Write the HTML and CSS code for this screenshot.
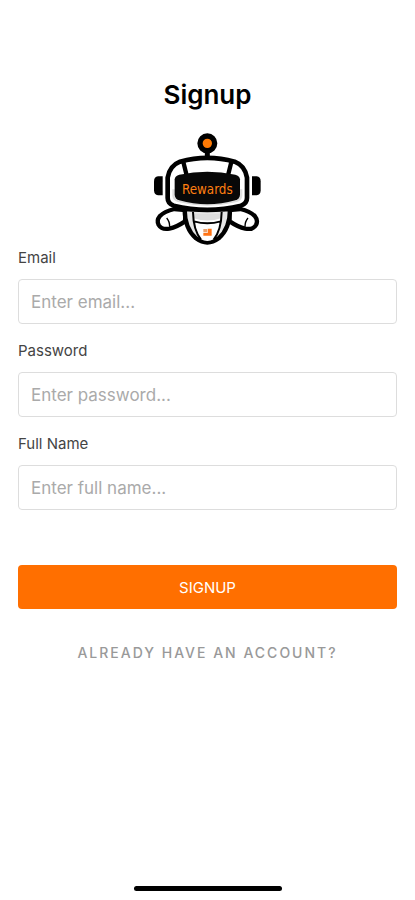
FILE: index.html
```
<!DOCTYPE html>
<html lang="en">
<head>
    <meta charset="UTF-8">
    <meta name="viewport" content="width=device-width, initial-scale=1.0">
    <title>Signup</title>
    <link rel="stylesheet" href="styles.css">
</head>
<body>

    <main class="signup">
        <h1>Signup</h1>

        <!-- Robot logo -->
        <svg class="logo" viewBox="15 18 345 348" role="img" aria-label="Rewards robot">
            <!-- antenna -->
            <path d="M187 65V105" stroke="#000" stroke-width="15"/>
            <circle cx="187" cy="52" r="22" fill="#ff7a05" stroke="#000" stroke-width="16"/>
            <!-- ears -->
            <path d="M53 151V208H39Q27 206 27 193V166Q27 153 39 151Z"/>
            <path d="M321 151V208H335Q347 206 347 193V166Q347 153 335 151Z"/>
            <!-- arms -->
            <path d="M88 249Q58 256 44 271Q34 283 41 297Q50 312 73 308Q95 303 120 286L122 252Z" fill="#fff" stroke="#000" stroke-width="13"/>
            <path d="M286 249Q316 256 330 271Q340 283 333 297Q324 312 301 308Q279 303 254 286L252 252Z" fill="#fff" stroke="#000" stroke-width="13"/>
            <path d="M65 276Q74 286 74 302M309 276Q300 286 300 302" fill="none" stroke="#000" stroke-width="4"/>
            <!-- body -->
            <path d="M119 250Q119 308 153 337Q187 362 221 337Q255 308 255 250Z" fill="#e6e6e6" stroke="#000" stroke-width="13"/>
            <path d="M143 262Q144 312 168 340Q187 350 206 340Q230 312 231 262Z" fill="#fff"/>
            <path d="M146 262H228V277Q187 290 146 277Z" fill="#dcdcdc"/>
            <path d="M144 258Q145 312 168 341M230 258Q229 312 206 341M147 286Q187 298 227 286" fill="none" stroke="#000" stroke-width="6"/>
            <path d="M175 309H186V319H175Z" fill="#e9a16d"/>
            <path d="M188 308H200V329H175V321H188Z" fill="#ff7416"/>
            <!-- head -->
            <path d="M105 107Q187 84 269 107Q300 119 306 155V216Q306 232 288 239Q187 264 86 239Q68 232 68 216V155Q74 119 105 107Z" fill="#fff" stroke="#000" stroke-width="14"/>
            <path d="M82 210Q84 224 98 228Q187 250 276 228Q290 224 292 210V190H82Z" fill="#dedede"/>
            <path d="M115 108L126 152M259 108L248 152" stroke="#000" stroke-width="13"/>
            <path d="M103 146Q187 128 271 146Q284 149 285 160V206Q284 219 271 223Q187 247 103 223Q90 219 89 206V160Q90 149 103 146Z" fill="#080808"/>
            <text class="logo-text" x="187" y="205" text-anchor="middle">Rewards</text>
        </svg>

        <form class="signup-form">
            <div class="field">
                <label for="email">Email</label>
                <input type="email" id="email" placeholder="Enter email...">
            </div>
            <div class="field">
                <label for="password">Password</label>
                <input type="password" id="password" placeholder="Enter password...">
            </div>
            <div class="field">
                <label for="full-name">Full Name</label>
                <input type="text" id="full-name" placeholder="Enter full name...">
            </div>
            <button type="submit" class="signup-btn">SIGNUP</button>
        </form>

        <a href="#" class="login-link">ALREADY HAVE AN ACCOUNT?</a>
    </main>

    <div class="home-bar"></div>

</body>
</html>
```
FILE: styles.css
```
* {
    box-sizing: border-box;
}
body {
    display: flex;
    flex-direction: column;
    min-height: 100vh;
    margin: 0;
    font-family: Inter, "Liberation Sans", sans-serif;
    background-color: #fff;
}
.signup {
    flex: 1;
    display: flex;
    flex-direction: column;
    align-items: center;
    padding: 79px 18px 24px;
}
h1 {
    margin: 0;
    font-size: 26px;
    font-weight: 600;
    line-height: 32px;
    color: #000;
}
.logo {
    display: block;
    width: 115px;
    height: 116px;
    margin-top: 21px;
}
.logo-text {
    font-family: "Liberation Sans Narrow", "DejaVu Sans Condensed", sans-serif;
    font-size: 40px;
    fill: #ff7f11;
}
.signup-form {
    display: flex;
    flex-direction: column;
    gap: 17px;
    width: 100%;
}
.field {
    display: flex;
    flex-direction: column;
    gap: 11px;
}
label {
    font-size: 15px;
    line-height: 20px;
    color: #444;
}
input {
    width: 100%;
    height: 45px;
    padding: 0 12px;
    font-family: inherit;
    font-size: 17px;
    color: #333;
    background-color: #fff;
    border: 1px solid #ddd;
    border-radius: 4px;
}
input::placeholder {
    color: #aaa;
}
.signup-btn {
    height: 44px;
    margin-top: 38px;
    padding: 0;
    font-family: inherit;
    font-size: 15px;
    color: #fff;
    background-color: #ff6f00;
    border: none;
    border-radius: 4px;
    cursor: pointer;
}
.login-link {
    margin-top: 34px;
    font-size: 14px;
    font-weight: 500;
    line-height: 20px;
    letter-spacing: 2px;
    color: #999;
    text-decoration: none;
}
.home-bar {
    width: 148px;
    height: 5px;
    margin: 0 auto 9px;
    background-color: #000;
    border-radius: 3px;
}
```
